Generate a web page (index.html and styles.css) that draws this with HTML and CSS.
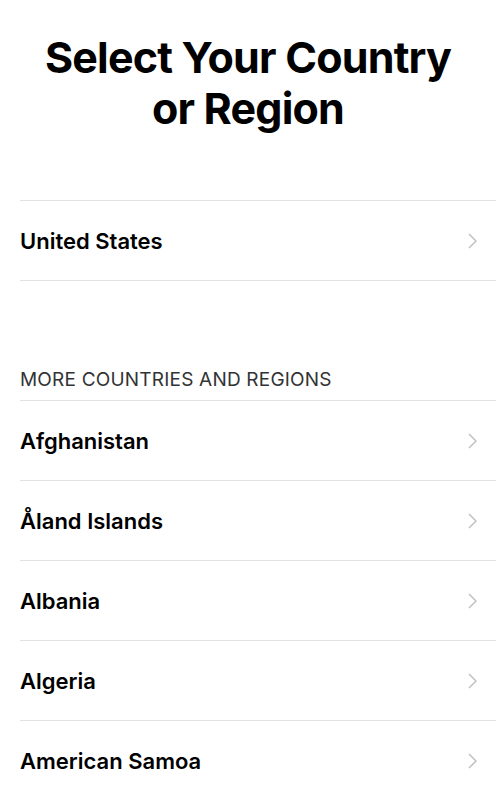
FILE: index.html
```html
<!DOCTYPE html>
<html>
<head>
<meta charset="utf-8">
<link rel="stylesheet" href="styles.css">
</head>
<body>
<main class="page">
  <h1 class="title">Select Your Country<br>or Region</h1>
  <ul class="list list-first">
    <li class="row"><span class="name">United States</span><svg class="chev" viewBox="0 0 10 16"><path d="M1.5 1.5 L8 8 L1.5 14.5"/></svg></li>
  </ul>
  <div class="section-head">MORE COUNTRIES AND REGIONS</div>
  <ul class="list">
    <li class="row"><span class="name">Afghanistan</span><svg class="chev" viewBox="0 0 10 16"><path d="M1.5 1.5 L8 8 L1.5 14.5"/></svg></li>
    <li class="row"><span class="name">Åland Islands</span><svg class="chev" viewBox="0 0 10 16"><path d="M1.5 1.5 L8 8 L1.5 14.5"/></svg></li>
    <li class="row"><span class="name">Albania</span><svg class="chev" viewBox="0 0 10 16"><path d="M1.5 1.5 L8 8 L1.5 14.5"/></svg></li>
    <li class="row"><span class="name">Algeria</span><svg class="chev" viewBox="0 0 10 16"><path d="M1.5 1.5 L8 8 L1.5 14.5"/></svg></li>
    <li class="row"><span class="name">American Samoa</span><svg class="chev" viewBox="0 0 10 16"><path d="M1.5 1.5 L8 8 L1.5 14.5"/></svg></li>
  </ul>
</main>
</body>
</html>
```
FILE: styles.css
```css
html, body {
  margin: 0;
  padding: 0;
  background: #fff;
}
body {
  font-family: Inter, "Liberation Sans", sans-serif;
  color: #000;
  overflow: hidden;
}
.page {
  width: 496px;
}
.title {
  margin: 0;
  padding-top: 32px;
  font-size: 43px;
  line-height: 51px;
  font-weight: 700;
  text-align: center;
  letter-spacing: -0.8px;
}
.list {
  list-style: none;
  margin: 0;
  padding: 0 0 0 20px;
}
.list-first {
  margin-top: 66px;
}
.row {
  display: flex;
  align-items: center;
  justify-content: space-between;
  height: 79px;
  border-top: 1px solid #e2e2e4;
  padding-right: 18px;
}
.list-first .row {
  border-bottom: 1px solid #e2e2e4;
}
.name {
  font-size: 22px;
  font-weight: 600;
  letter-spacing: 0;
}
.chev {
  width: 10px;
  height: 16px;
  fill: none;
  stroke: #c4c4c8;
  stroke-width: 1.7;
  stroke-linecap: round;
  stroke-linejoin: round;
}
.section-head {
  margin-top: 89px;
  padding: 0 20px 10px;
  font-size: 19px;
  line-height: 20px;
  color: #333335;
  letter-spacing: 0.2px;
}
```
